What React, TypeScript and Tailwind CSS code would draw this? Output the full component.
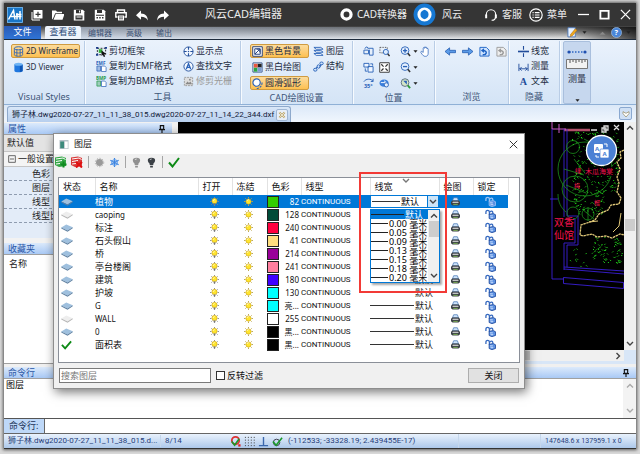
import { useState, type ReactNode } from "react";
import { clsx } from "clsx";

type Layer = {
  name: string;
  color: string;
  swatch: string;
  state: "used" | "empty" | "current";
};

const layers: Layer[] = [
  { name: "植物", color: "82", swatch: "#33cc00", state: "used" },
  { name: "caoping", color: "128", swatch: "#004c39", state: "empty" },
  { name: "标注", color: "240", swatch: "#ff003f", state: "used" },
  { name: "石头假山", color: "41", swatch: "#ffdf7f", state: "used" },
  { name: "桥", color: "214", swatch: "#990099", state: "used" },
  { name: "亭台楼阁", color: "241", swatch: "#ff7f9f", state: "used" },
  { name: "建筑", color: "180", swatch: "#3f00ff", state: "used" },
  { name: "护坡", color: "130", swatch: "#00ffff", state: "used" },
  { name: "G", color: "亮...", swatch: "#00ffff", state: "used" },
  { name: "WALL", color: "255", swatch: "#ffffff", state: "empty" },
  { name: "0", color: "黑...", swatch: "#000000", state: "used" },
  { name: "面积表", color: "黑...", swatch: "#000000", state: "current" },
];

const columns = [
  { label: "状态", width: "w-[36px]" },
  { label: "名称", width: "w-[103px]" },
  { label: "打开", width: "w-[34px]" },
  { label: "冻结", width: "w-[35px]" },
  { label: "色彩", width: "w-[34px]" },
  { label: "线型", width: "w-[69px]" },
  { label: "线宽", width: "w-[69px]" },
  { label: "绘图", width: "w-[34px]" },
  { label: "锁定", width: "w-[35px]" },
];

const weights = ["默认", "0.00 毫米", "0.05 毫米", "0.09 毫米", "0.13 毫米", "0.15 毫米", "0.18 毫米", "0.20 毫米"];

const BLUE = "#2a62b8";

/* ---------- icons ---------- */

const Icon = ({ children, size = "size-[11px]", box = "0 0 12 12" }: { children: ReactNode; size?: string; box?: string }) => (
  <svg viewBox={box} className={clsx("shrink-0", size)} fill="none" aria-hidden="true">
    {children}
  </svg>
);

const Logo = () => (
  <Icon size="size-4" box="0 0 16 16">
    <rect width="16" height="16" rx="1" fill="#1976c8" />
    <rect x=".5" y=".5" width="15" height="15" fill="none" stroke="#8cc4ee" strokeWidth=".7" />
    <path d="M1.500 12.500 6.500 3.500 8 12.500M4 9.500h10.500M10 12.500V6M13 12.500V4M9 7.500h5.500" stroke="#fff" strokeWidth="1.500" />
  </Icon>
);

const titleIcons: { label: string; art: ReactNode }[] = [
  {
    label: "新建",
    art: (
      <>
        <path d="M1 3v8h8" stroke="#fff" />
        <rect x="2.500" y="1" width="9" height="8.500" rx=".6" fill="#fff" />
        <path d="M7 2.800v5M4.500 5.300h5" stroke="#333" strokeWidth="1.200" />
      </>
    ),
  },
  { label: "打开", art: <path d="M0 10.500V1.500h4l1 1.200h5v1.600H3.200L1 9.500zM3.800 5H12.500L10.500 10.800H1.500z" fill="#fff" /> },
  {
    label: "保存",
    art: (
      <>
        <path d="M.8.800h9L11.300 2.200v9.200H.8z" fill="#fff" />
        <path d="M3 1h5v3.300H3zM2.500 6.500h7v4h-7z" fill="#333" />
        <path d="M6 1.500h1.200v2H6zM3.500 7.500h5v1h-5z" fill="#fff" />
      </>
    ),
  },
  {
    label: "另存为",
    art: (
      <>
        <path d="M.8.800h9L11.300 2.200v9.200H.8z" fill="#fff" />
        <path d="M3 1h5v3H3zM2 5.800h8v1H2zM2.500 8h1.500v1.500H2.500zM5.200 8h1.500v1.500H5.200zM8 8h1.500v1.500H8z" fill="#333" />
      </>
    ),
  },
  {
    label: "打印",
    art: (
      <>
        <path d="M2.500 3V1h7v2M2.500 8H.8V3.800h10.400V8H9.500" stroke="#fff" strokeWidth="1.400" />
        <path d="M3 6.500h6v5H3z" fill="#fff" />
        <path d="M4 8h4M4 9.800h4" stroke="#333" strokeWidth=".8" />
      </>
    ),
  },
  { label: "撤销", art: <path d="M5 1.500v3c4.500 0 6.800 3 6.800 7C10.500 9 8.500 7.800 5 7.800v3L0 6.200z" fill="#fff" /> },
  { label: "重做", art: <path d="M7 1.500v3C2.500 4.500.2 7.500.2 11.500 1.500 9 3.500 7.800 7 7.800v3l5-4.600z" fill="#fff" /> },
];

const WireCylinder = () => (
  <Icon>
    <ellipse cx="6" cy="2.500" rx="4.500" ry="1.700" stroke={BLUE} />
    <path d="M1.500 2.500v7c0 2.300 9 2.300 9 0v-7M1.500 6c0 2.200 9 2.200 9 0M4.200 4v7M7.800 4v7" stroke={BLUE} strokeWidth=".9" />
  </Icon>
);

const SolidCylinder = () => (
  <Icon>
    <path d="M1.500 2.500v7c0 2.400 9 2.400 9 0v-7z" fill="#1f77df" />
    <path d="M7.500 3h3v7l-3 1z" fill="#0e55b5" />
    <ellipse cx="6" cy="2.500" rx="4.500" ry="1.700" fill="#6fb4f4" />
  </Icon>
);

const CropIcon = () => (
  <Icon>
    <path d="M1.500 2.500h9v7h-9z" stroke="#222" strokeDasharray="2 1.500" />
    <path d="M3 3.500h4v4H3z" fill="#2fae35" />
    <path d="M0 1h2.500v2H0zM9.500 1H12v2H9.500zM0 8.500h2.500v2H0z" fill="#1b3c8c" />
    <path d="m6 5 5 3.500-2 .5 1 2.500-1.500.5-1-2.500L6 11z" fill="#111" />
  </Icon>
);

const CopyFormatIcon = ({ label, fill }: { label: string; fill: string }) => (
  <Icon>
    <text x="0" y="4.200" fontSize="5" fontWeight="700" fill={fill}>
      {label}
    </text>
    <path d="M1 5.500h4V11H1z" fill={fill} fillOpacity=".35" stroke={fill} strokeWidth=".8" />
    <path d="M6 5.500h3.500L11 7v4.500H6z" fill="#fff" stroke={BLUE} strokeWidth=".8" />
  </Icon>
);

const TargetIcon = () => (
  <Icon>
    <circle cx="6" cy="6" r="5" stroke="#24509c" fill="#f3f8ff" />
    <path d="M6 1v3M6 8v3M1 6h3M8 6h3" stroke="#24509c" strokeWidth="1.200" />
    <circle cx="6" cy="6" r=".8" fill="#24509c" />
  </Icon>
);

const FindTextIcon = () => (
  <Icon>
    <circle cx="6" cy="6" r="5" stroke="#24509c" fill="#f3f8ff" />
    <path d="m3.500 9 2.500-6 2.500 6M4.300 7h3.400" stroke={BLUE} strokeWidth="1.400" />
  </Icon>
);

const RasterIcon = () => (
  <Icon>
    <path d="M1.500 1.500h9v9h-9z" fill="#ddd" stroke="#999" strokeDasharray="2 1" />
    <path d="m2.500 9 2.500-3 1.500 1.500L8 6l2 3z" fill="#888" />
    <circle cx="7.500" cy="4" r="1" fill="#888" />
  </Icon>
);

const BlackBgIcon = () => (
  <Icon>
    <path d="M.8.800h10.400v10.400H.8z" fill="#fff" stroke="#1d3a78" />
    <path d="M3 3h6v6H3z" stroke="#1d3a78" />
    <path d="m3 9 5-5M5 3.500h3.500V7" stroke="#1d3a78" />
  </Icon>
);

const BwIcon = () => (
  <Icon>
    <path d="M1 1h10v10H1z" fill="#fff" stroke="#31528a" />
    <path d="M2 6h4v4.500H2z" fill="#2aa843" />
    <path d="M6 2h4.500v4H6z" fill="#222" />
    <path d="M6 6h4.500v4.500H6z" fill="#7b9bd0" />
    <path d="M2 2h4v4H2z" fill="#e9573f" />
  </Icon>
);

const ArcIcon = () => (
  <Icon>
    <circle cx="5" cy="5" r="4" fill="#fff" stroke={BLUE} strokeWidth="1.300" />
    <path d="M11 5c0 4-3 6.500-6.500 6.500" stroke={BLUE} strokeWidth="1.200" strokeDasharray="2.500 1" />
  </Icon>
);

const LayersIcon = () => (
  <Icon>
    <path d="M1 1.500h7.500l2.500 2H3.500zM1 4.800h7.500l2.500 2H3.500zM1 8.200h7.500l2.500 2H3.500z" fill="#fff" stroke={BLUE} />
  </Icon>
);

const StructureIcon = () => (
  <Icon>
    <path d="m2 10 3-4 2 1 3-4.500" stroke={BLUE} strokeWidth="1.200" />
    <ellipse cx="2.500" cy="9.500" rx="1.900" ry="1.600" fill="#cfe3fb" stroke={BLUE} />
    <ellipse cx="6" cy="6" rx="1.500" ry="1.900" fill="#cfe3fb" stroke={BLUE} />
    <ellipse cx="9.300" cy="2.600" rx="1.900" ry="1.500" fill="#cfe3fb" stroke={BLUE} />
  </Icon>
);

const viewIcons: { label: string; art: ReactNode; menu?: boolean }[] = [
  {
    label: "旋转视图",
    art: <path d="M5 2.500h6v7.500H7V4M1 4.500h5v4H1zM2 3l1.500-2 2 .8" stroke={BLUE} />,
  },
  {
    label: "窗口缩放",
    art: (
      <>
        <path d="M1 1.500h8v6H1z" stroke="#555" strokeDasharray="1.500 1.200" />
        <circle cx="7.500" cy="6.500" r="2.800" fill="#dcecff" stroke={BLUE} />
        <path d="m9.500 8.500 2 2.500" stroke="#333" strokeWidth="1.500" />
      </>
    ),
  },
  {
    label: "放大",
    menu: true,
    art: (
      <>
        <circle cx="5.500" cy="5" r="4.200" fill="#e6f1ff" stroke={BLUE} />
        <path d="M3.200 5h4.600M5.500 2.700v4.600" stroke={BLUE} strokeWidth="1.500" />
        <path d="m8.500 8 2.500 3" stroke="#333" strokeWidth="1.700" />
      </>
    ),
  },
  {
    label: "复制视图",
    art: <path d="M1 1.500h5.500v4H1zM5.500 5h5.500v6H5.500zM2.500 7v3h2M8 2h2.500v2" fill="#eef5ff" stroke={BLUE} />,
  },
  {
    label: "适应窗口",
    art: (
      <>
        <path d="M.8.800h10.400v10.400H.8z" fill="#fff" stroke="#333" />
        <path d="m2.500 2.500 7 7M9.500 2.500l-7 7" stroke="#333" strokeWidth="1.300" strokeDasharray="3.500 3" />
      </>
    ),
  },
  {
    label: "缩小",
    menu: true,
    art: (
      <>
        <circle cx="5.500" cy="5" r="4.200" fill="#e6f1ff" stroke={BLUE} />
        <path d="M3.200 5h4.600" stroke={BLUE} strokeWidth="1.500" />
        <path d="m8.500 8 2.500 3" stroke="#333" strokeWidth="1.700" />
      </>
    ),
  },
  {
    label: "旋转35度",
    art: (
      <>
        <path d="M1 4c2-3.500 8-3.500 10-.5M11 .8v3H8.500" stroke={BLUE} />
        <text x="1" y="10.500" fontSize="6" fontWeight="700" fill={BLUE}>
          35°
        </text>
      </>
    ),
  },
  {
    label: "平移缩放",
    art: (
      <>
        <ellipse cx="5.500" cy="5.500" rx="5" ry="4" fill="#3b7fdc" />
        <path d="M2 5h5M5.500 3 8 5 5.500 7" stroke="#fff" />
        <circle cx="8" cy="7.500" r="2.300" fill="#e6f1ff" stroke={BLUE} />
      </>
    ),
  },
  {
    label: "缩放范围",
    menu: true,
    art: (
      <>
        <circle cx="5.500" cy="5" r="4.200" fill="#d3e5c6" stroke="#5a6c80" />
        <path d="m3.500 3 4 0 0 4z" fill={BLUE} />
        <path d="m8.500 8 2.500 3" stroke="#2b9a38" strokeWidth="2" />
      </>
    ),
  },
];

const HandIcon = () => (
  <Icon>
    <path
      d="M3.500 7V2.500c0-1 1.300-1 1.300 0V1.600c0-1 1.400-1 1.400 0v.6c0-1 1.400-1 1.400 0v1c0-1 1.300-.8 1.300.2V8c0 2-1 3.300-3 3.300S3.300 10.500 1 7.200c-.6-1 .6-1.800 1.300-1z"
      fill="#fff"
      stroke={BLUE}
      strokeWidth=".8"
    />
  </Icon>
);

const ArrowIcon = ({ flip }: { flip?: boolean }) => (
  <Icon>
    <path d={flip ? "M12 6 7 2v2.700H.5v2.600H7V10z" : "m0 6 5-4v2.700h6.500v2.600H5V10z"} fill="#5b9be8" stroke="#1d56ad" strokeWidth=".8" />
  </Icon>
);

const PageTurnIcon = ({ muted }: { muted?: boolean }) => {
  const c = muted ? "#9b9b9b" : "#1c62c4";
  return (
    <Icon>
      <path d="M1 1.500h7l3 3v6.500H1z" fill={muted ? "#eee" : "#cfe4ff"} stroke={c} />
      <path d="M4 9.500c4.500.5 5.500-4 1-4.500" stroke={c} strokeWidth="1.600" />
      <path d="m2 5 3.500-2.500v5z" fill={c} />
    </Icon>
  );
};

const Caret = () => (
  <Icon size="size-[5px]" box="0 0 6 6">
    <path d="M.5 1.500h5L3 4.500z" fill="#222" />
  </Icon>
);

const Chevron = ({ d = "m1 2 3 3 3-3", className = "text-[#444]" }: { d?: string; className?: string }) => (
  <svg viewBox="0 0 8 8" className={clsx("size-2 shrink-0", className)} fill="none" stroke="currentColor" strokeWidth="1.400" aria-hidden="true">
    <path d={d} />
  </svg>
);

const UP = "m1 5.500 3-3 3 3";

const PinIcon = () => (
  <Icon size="size-2">
    <path d="M3.500 1h5v5.500h-5zM1.500 7h9M6 7v5" stroke="#111" strokeWidth="1.700" />
  </Icon>
);

const Sun = ({ rays }: { rays?: boolean }) => (
  <Icon size="size-[9px]">
    <path
      d="M6 0v2M6 10v2M0 6h2M10 6h2M1.800 1.800l1.400 1.400M8.800 8.800l1.400 1.400M1.800 10.200l1.400-1.400M8.800 3.200l1.400-1.400"
      stroke={rays ? "#888" : "#b5a24a"}
      strokeWidth="1.200"
    />
    <circle cx="6" cy={rays ? 5.300 : 6} r="3.500" fill="#ffe52e" stroke="#c79a12" strokeWidth=".7" />
    <path d="M4.200 5c.3-1 1-1.500 2-1.500" stroke="#fff" strokeWidth="1" />
    {rays && <path d="M4.800 8.600h2.400V11H4.800z" fill="#777" />}
  </Icon>
);

const PrinterIcon = () => (
  <Icon size="size-[9px]">
    <path d="M3.500 1h5L10 5H2z" fill="#cfe4fa" stroke="#4778b5" />
    <path d="M1.500 4.800h9L12 6.500v3l-2 1.700H2L0 9.500v-3z" fill="#3c4147" />
    <path d="M2.500 6.300h7l.8 1.200H1.700z" fill="#f1f1f1" />
    <path d="M3 9.200h6v1H3z" fill="#8fd05a" />
  </Icon>
);

const UnlockIcon = ({ light }: { light?: boolean }) => (
  <Icon size="size-[11px]">
    <path d="M4.800 6.500V3.500C4.800.8 1 .8 1 3.500V5.500M8.500 5V3.800C8.500 1.800 6 1.800 6 3.500" stroke={light ? "#9dc3f5" : "#3669bf"} strokeWidth="1.400" />
    <path d="M4.500 5.800 9 5l2.500 1.300v4L7.500 11.600l-3-1.300z" fill="#5b90e2" stroke={light ? "#9dc3f5" : "#1c469a"} strokeWidth=".9" />
    <path d="M5.500 7.500h3M6 9.500h3" stroke="#d5e6ff" />
  </Icon>
);

const LayerState = ({ state }: { state: Layer["state"] }) =>
  state === "current" ? (
    <Icon>
      <path d="m1 6.500 3.500 3.800L11 2.500" stroke="#0d8a16" strokeWidth="2" />
    </Icon>
  ) : (
    <Icon size="h-[9px] w-[12px]" box="0 0 12 9">
      <path d="m.3 4.500 5-3 6.400 2.700-5.200 3.300z" fill={state === "used" ? "#9fc0de" : "#eeeeee"} />
      <path d="m.3 4.500 6.200 3 5.200-3.300v1L6.500 8.700.3 5.500z" fill={state === "used" ? "#5d7fa0" : "#b5b5b5"} />
    </Icon>
  );

/* ---------- ribbon ---------- */

const Group = ({ label, children, className }: { label: string; children: ReactNode; className?: string }) => (
  <section className={clsx("flex shrink-0 flex-col border-r border-[#b9cde6] shadow-[1px_0_0_#f7fbff]", className)}>
    <div className="flex grow pt-[2px]">{children}</div>
    <h2 className="h-[14px] text-center text-[9px] leading-[13px] text-[#3d5578]">{label}</h2>
  </section>
);

const RibbonButton = ({
  icon,
  label,
  active,
  disabled,
  small,
}: {
  icon: ReactNode;
  label: string;
  active?: boolean;
  disabled?: boolean;
  small?: boolean;
}) => (
  <button
    type="button"
    disabled={disabled}
    className={clsx(
      "my-px flex h-[14px] items-center gap-[2px] rounded-[2px] border px-px leading-[12px] whitespace-nowrap",
      small ? "text-[8px]" : "text-[9px]",
      active ? "border-[#cf9b41] bg-linear-to-b from-[#fcdc9c] to-[#fdc04e]" : "border-transparent",
      disabled ? "text-[#9a9a9a]" : "text-[#1e2c42]"
    )}
  >
    {icon}
    {label}
  </button>
);

const tabs = ["编辑器", "高级", "输出"];

const TitleBar = () => (
  <header className="flex h-[23px] shrink-0 items-center bg-[#353535] pl-[3px] text-[10px] text-[#ececec]">
    <Logo />
    <div className="ml-2 flex gap-[9px]">
      {titleIcons.map((item) => (
        <button key={item.label} type="button" aria-label={item.label}>
          <Icon size="size-3">{item.art}</Icon>
        </button>
      ))}
    </div>
    <h1 className="ml-9 text-[11px]">风云CAD编辑器</h1>
    <div className="ml-auto flex items-center">
      <button type="button" className="flex items-center gap-1">
        <Icon size="size-[13px]">
          <circle cx="6" cy="6" r="4.200" stroke="#fff" strokeWidth="3" />
        </Icon>
        CAD转换器
      </button>
      <button type="button" className="ml-[6px] flex items-center gap-[6px]">
        <Icon size="size-[23px]">
          <circle cx="6" cy="6" r="5.700" fill="#1678d3" />
          <circle cx="6" cy="6" r="2.900" stroke="#fff" strokeWidth="1.600" />
          <path d="m6 3.500 1 .5v4L6 8.500 5 8V4z" fill="#1678d3" />
        </Icon>
        风云
      </button>
      <button type="button" className="ml-[22px] flex items-center gap-1">
        <Icon size="size-[14px]">
          <path d="M2 6.500V5.500a4 4 0 0 1 8 0v1.500c0 2-1 3.500-3.500 3.500" stroke="#fff" />
          <path d="M1 5.500h1.700v3.300H1zM9.300 5.500H11v3.300H9.300z" fill="#fff" />
        </Icon>
        客服
      </button>
      <button type="button" className="ml-[7px] flex items-center gap-1">
        <Icon size="size-[14px]">
          <circle cx="6" cy="6" r="5.300" stroke="#fff" />
          <path d="M3 4h1M5 4h4M3 6h1M5 6h4M3 8h1M5 8h4" stroke="#fff" />
        </Icon>
        菜单
      </button>
      <button type="button" aria-label="最小化" className="ml-[11px]">
        <Icon>
          <path d="M0 6h12" stroke="#fff" strokeWidth="1.400" />
        </Icon>
      </button>
      <button type="button" aria-label="最大化" className="ml-[10px]">
        <Icon>
          <path d="M1.500 2h9v8.500h-9z" stroke="#fff" strokeWidth="2" />
        </Icon>
      </button>
      <button type="button" aria-label="关闭窗口" className="mr-[5px] ml-[10px]">
        <Icon>
          <path d="m1 1 10 10M11 1 1 11" stroke="#fff" strokeWidth="1.400" />
        </Icon>
      </button>
    </div>
  </header>
);

const TabStrip = () => (
  <nav className="flex h-[14px] shrink-0 items-end border-b border-[#1d2b3c] bg-linear-to-b from-[#3d3d3d] to-[#e9e9e9] text-[9px] leading-[12px]">
    <a href="#file" className="h-[13px] w-[37px] bg-linear-to-b from-[#2a5ab4] to-[#2f74d6] text-center text-white">
      文件
    </a>
    <a href="#viewer" className="ml-1 h-[13px] w-[36px] rounded-t-[2px] bg-[#eef4fc] text-center text-[#2d4a78]">
      查看器
    </a>
    <div className="flex grow gap-[14px] bg-linear-to-r from-[#c3d3ea]/60 to-transparent pl-[7px] text-[8px]">
      {tabs.map((tab) => (
        <a key={tab} href={`#${tab}`} className="text-[#3b4f72]">
          {tab}
        </a>
      ))}
    </div>
    <div className="flex items-center gap-1 bg-linear-to-r from-transparent to-black/70 pr-[5px] pb-px">
      <Icon>
        <path d="M1 .8h8v10H1z" fill="#e9f2ff" stroke="#4a76b8" />
        <path d="m4 8 5-6 2 1.500-5 6-2.500 1z" fill="#f1a91e" stroke="#9c5d0e" strokeWidth=".5" />
      </Icon>
      <Caret />
      <span className="w-[3px]" />
      <Icon size="size-[9px]">
        <path d="m2 9 4-4 4 4z" fill="#888" />
      </Icon>
      <Icon>
        <circle cx="6" cy="6" r="5.500" fill="#4a86d8" stroke="#b8d4f5" strokeWidth=".6" />
        <text x="3.800" y="9" fontSize="8" fontWeight="700" fill="#fff">
          ?
        </text>
      </Icon>
      <Caret />
    </div>
  </nav>
);

const Ribbon = () => (
  <div className="flex h-[65px] shrink-0 overflow-hidden border-b border-[#8fb0d6] bg-linear-to-b from-[#eaf2fc] to-[#d4e4f6] pt-px">
    <Group label="Visual Styles" className="w-[81px]">
      <div className="flex grow flex-col pr-1 pl-[7px]">
        <RibbonButton icon={<WireCylinder />} label="2D Wireframe" active small />
        <RibbonButton icon={<SolidCylinder />} label="3D Viewer" small />
      </div>
    </Group>
    <Group label="工具" className="w-[156px]">
      <div className="w-[87px] pl-[9px]">
        <RibbonButton icon={<CropIcon />} label="剪切框架" />
        <RibbonButton icon={<CopyFormatIcon label="EMF" fill={BLUE} />} label="复制为EMF格式" />
        <RibbonButton icon={<CopyFormatIcon label="BMP" fill="#279a4b" />} label="复制为BMP格式" />
      </div>
      <div className="pl-[9px]">
        <RibbonButton icon={<TargetIcon />} label="显示点" />
        <RibbonButton icon={<FindTextIcon />} label="查找文字" />
        <RibbonButton icon={<RasterIcon />} label="修剪光栅" disabled />
      </div>
    </Group>
    <Group label="CAD绘图设置" className="w-[112px]">
      <div className="flex w-[68px] flex-col pl-[9px]">
        <RibbonButton icon={<BlackBgIcon />} label="黑色背景" active />
        <RibbonButton icon={<BwIcon />} label="黑白绘图" />
        <RibbonButton icon={<ArcIcon />} label="圆滑弧形" active />
      </div>
      <div className="pl-[2px]">
        <RibbonButton icon={<LayersIcon />} label="图层" />
        <RibbonButton icon={<StructureIcon />} label="结构" />
      </div>
    </Group>
    <Group label="位置" className="w-[82px]">
      <div className="grid grid-cols-[16px_21px_20px] content-start pl-[10px]">
        {viewIcons.map((item) => (
          <button key={item.label} type="button" aria-label={item.label} className="flex h-4 items-center gap-[2px]">
            <Icon>{item.art}</Icon>
            {item.menu && <Caret />}
          </button>
        ))}
      </div>
      <button type="button" aria-label="平移" className="flex h-4 items-center">
        <HandIcon />
      </button>
    </Group>
    <Group label="浏览" className="w-[74px]">
      <div className="flex h-4 items-center gap-[6px] pl-[10px]">
        <ArrowIcon />
        <ArrowIcon flip />
        <PageTurnIcon />
        <PageTurnIcon muted />
      </div>
    </Group>
    <Group label="隐藏" className="w-[51px]">
      <div className="pl-[7px]">
        <RibbonButton
          icon={
            <Icon>
              <path d="M0 6h12" stroke="#214c9a" strokeWidth="1.800" />
              <path d="M6 0v4M6 8v4" stroke="#214c9a" strokeWidth="1.200" />
            </Icon>
          }
          label="线宽"
        />
        <RibbonButton
          icon={
            <Icon>
              <path d="M1 3v8M11 3v8M1.500 8.500h9M4 6.500l-2 2 2 2M8 6.500l2 2-2 2" stroke="#214c9a" />
            </Icon>
          }
          label="测量"
        />
        <RibbonButton
          icon={
            <Icon>
              <text x="2" y="10" fontSize="11" fontWeight="700" fill="#214c9a" fontFamily="Liberation Serif, serif">
                A
              </text>
            </Icon>
          }
          label="文本"
        />
      </div>
    </Group>
    <button type="button" className="ml-[3px] flex w-[28px] shrink-0 flex-col items-center rounded-[2px] border border-[#a9bfdd] bg-[#c6d7ee] pt-[7px] text-[9px] text-[#1e2c42]">
      <Icon size="h-[6px] w-[20px]" box="0 0 20 6">
        <path d="M2 3h16" stroke="#2d66c4" strokeDasharray="1.500 1.500" strokeWidth="1.500" />
        <circle cx="2" cy="3" r="1.600" fill="#1e4fb0" />
        <circle cx="18" cy="3" r="1.600" fill="#1e4fb0" />
      </Icon>
      <Icon size="mt-[4px] h-[10px] w-[22px]" box="0 0 22 10">
        <path d="M.5.500h21v9H.5z" fill="#f2f2f2" stroke="#777" />
        <path d="M4 1v3M7 1v2M10 1v3M13 1v2M16 1v3M19 1v2" stroke="#555" />
      </Icon>
      <span className="mt-1 grow leading-[12px]">测量</span>
      <Caret />
    </button>
  </div>
);

const DocumentTabs = () => (
  <div className="flex h-[17px] shrink-0 items-end justify-between bg-linear-to-b from-[#dbe8f8] to-[#f0f6fd] pr-1 pl-[3px]">
    <div className="flex h-[16px] items-center gap-[2px] rounded-t-[3px] border border-b-0 border-[#8ea9cc] bg-linear-to-b from-[#d9e7f8] to-[#b7cfee] pr-[2px] pl-1">
      <a href="#document" className="font-[Roboto,'Noto_Sans_CJK_SC',sans-serif] text-[8px] whitespace-nowrap text-[#12203a]">
        狮子林.dwg2020-07-27_11_11_38_015.dwg2020-07-27_11_14_22_344.dxf
      </a>
      <button type="button" aria-label="关闭文档" className="flex size-[12px] items-center justify-center rounded-[2px] border border-[#9fb6d4] bg-[#e8eff8]">
        <Icon size="size-2">
          <path d="m2 2 8 8M10 2l-8 8" stroke="#b79f5e" strokeWidth="3" />
          <path d="m2 2 8 8M10 2l-8 8" stroke="#fff" strokeWidth="1" />
        </Icon>
      </button>
    </div>
    <button type="button" aria-label="文档列表" className="mb-[2px] flex size-[13px] items-center justify-center rounded-[2px] border border-[#8aa8d0] bg-[#cfe0f5]">
      <Icon size="size-2">
        <path d="M6 10.500 1.500 5.500V2.500L6 5l4.500-2.500v3z" fill="#fff" stroke="#8c8054" />
      </Icon>
    </button>
  </div>
);

const PanelHeader = ({ label, pin }: { label: string; pin?: boolean }) => (
  <div className="flex h-[12px] shrink-0 items-center justify-between border-b border-[#a0a0a0] bg-linear-to-b from-[#dceafb] to-[#a9c9f5] pr-[6px] pl-1 text-[9px] leading-[11px] text-[#2b57a6]">
    <h2>{label}</h2>
    {pin && <PinIcon />}
  </div>
);

const properties = ["色彩", "图层", "线型", "线型比例"];

const SidePanel = () => (
  <aside className="flex w-[174px] shrink-0 flex-col bg-[#f2f2f2] pt-px pr-[6px] text-[9px] text-[#222]">
    <PanelHeader label="属性" pin />
    <div className="h-4 bg-[#e4e4e4] pl-[3px] leading-4">默认值</div>
    <div className="bg-[#e3ecf8] pb-[15px]">
      <div className="flex h-4 items-center gap-[2px] border-y border-[#c5c5c5] bg-[#f4f4f4] pl-1">
        <Icon size="size-2">
          <path d="M1 1h10v10H1zM3 6h6" stroke="#555" strokeWidth="1.300" />
        </Icon>
        一般设置
      </div>
      {properties.map((label) => (
        <div key={label} className="h-[14px] border-b border-dashed border-[#8f9caf] pl-7 leading-[14px]">
          {label}
        </div>
      ))}
    </div>
    <div className="h-[5px]" />
    <PanelHeader label="收藏夹" />
    <div className="grow border-b border-[#a0a0a0] bg-white pt-[2px] pl-[5px]">名称</div>
  </aside>
);

/* Scatter of vegetation dots; a fixed seed keeps the plan stable between renders */
const scatter = (count: number, x: number, y: number, w: number, h: number, seed: number) => {
  let s = seed;
  const next = () => {
    s = (s * 16807) % 2147483647;
    return s / 2147483647;
  };
  return Array.from({ length: count }, () => `M${(x + next() * w).toFixed(1)} ${(y + next() * h).toFixed(1)}l1 ${next() > 0.5 ? 1 : -1}`).join("");
};

const leaves = scatter(220, 570, 133, 46, 62, 77) + scatter(60, 572, 190, 30, 26, 41) + scatter(75, 591, 238, 30, 26, 19) + scatter(12, 568, 248, 24, 20, 5);

const SitePlan = () => (
  <svg viewBox="525 123 97 227" className="h-[227px] w-[97px] shrink-0" fill="none" aria-label="狮子林平面图">
    <path d="M562 131h26" stroke="#b0506a" strokeWidth="2.500" />
    <path d="M550 123v7h14M557 125v9" stroke="#c95ac9" />
    <path
      d="M550 130v150h11M548 200h8M562 130v90h11v24h-11v27M565 130v87h11v29h-11v22M562 268l60 4M562 270l60 5M561.500 278.500l60 5v6l-60-5z"
      stroke="#3a1fd6"
      strokeWidth=".9"
    />
    <g stroke="#1d8f1d" strokeWidth=".8">
      <circle cx="583" cy="170" r="27" />
      <circle cx="571" cy="148" r="6.500" />
      <circle cx="573" cy="190" r="13" />
      <circle cx="571" cy="214" r="6" />
      <circle cx="586" cy="215" r="6" />
      <path d="M556 195c0 8 3 14 8 18M572 160l14 18M562 170l20 6M564 186l20 8M582 140l24 12M580 210l12 10M586 208v14" />
    </g>
    <path d={leaves} stroke="#22d61c" strokeWidth="1" />
    <path
      d="m622 151-4 2 1 6-4 4 3 7-3 8 2 6-2 9 4 6-2 6-8 1-3 5-9 4-4 6-8 3-6 2-1 10 3 1 9-2 5 3 9-1 6 2 8-4 5 1"
      stroke="#e0c878"
      strokeDasharray="2.500 .6"
      strokeWidth="1.300"
    />
    <path d="m596 222-9 1M611 233l6-6 2-13" stroke="#e0c878" />
    <path d="M583 168h30v9h-30zM552 218h19v24h-19z" fill="#000" />
    <g fill="#f0124f" fontSize="7">
      <text x="583" y="175">
        木瓜海棠
      </text>
      <text x="573" y="174" fontSize="6">
        绿
      </text>
      <text x="572" y="189" fontSize="6">
        梅
      </text>
      <text x="592" y="206" fontSize="6">
        榴
      </text>
      <text x="552" y="227" fontSize="10">
        双香
      </text>
      <text x="552" y="240" fontSize="10">
        仙馆
      </text>
    </g>
    <path d="M589 131h6M602 127h4v4h-4zM600 129h4v4h-4zM612 126l5 5M617 126l-5 5" stroke="#ddd" strokeWidth="1.300" />
    <circle cx="599.500" cy="151.500" r="15" fill="#4b80d4" stroke="#fff" strokeWidth="1.300" />
    <rect x="592" y="145" width="9" height="9" rx="1" fill="#fff" />
    <rect x="598" y="150" width="9" height="9" rx="1" fill="#fff" stroke="#4b80d4" strokeWidth=".7" />
    <path d="M602 145h3v3M597 158h-3v-2" stroke="#fff" />
    <text x="593" y="151.500" fontSize="6" fontWeight="700" fill="#4b80d4">
      A
    </text>
    <text x="600.500" y="157" fontSize="6" fontWeight="700" fill="#4b80d4">
      A
    </text>
  </svg>
);

const Canvas = () => (
  <main className="flex min-w-0 grow flex-col bg-[#d8e6f7] pb-[3px]">
    <div className="flex grow">
      <div className="flex min-w-0 grow justify-end overflow-hidden bg-black">
        <SitePlan />
      </div>
      <div className="flex w-[12px] flex-col items-center bg-[#f0f0f0] py-[2px]">
        <Chevron d={UP} />
        <div className="grow-4" />
        <div className="h-[12px] w-[10px] bg-[#cdcdcd]" />
        <div className="grow-5" />
        <Chevron />
      </div>
    </div>
    <div className="mr-[12px] flex h-[11px] shrink-0 items-center justify-end bg-[#f0f0f0] pr-[2px]">
      <div className="mr-[84px] h-[9px] w-[180px] bg-[#cdcdcd]" />
      <Chevron d="m2.500 1 3 3-3 3" />
    </div>
  </main>
);

/* ---------- layer dialog ---------- */

const WeightPicker = () => {
  const [value, setValue] = useState("默认");

  return (
    <div className="relative flex h-[13px] items-center border border-[#0078d7] bg-white pl-px text-[9px] text-black">
      <div className="h-px w-[28px] shrink-0 bg-[#333]" />
      <select aria-label="线宽" value={value} onChange={(e) => setValue(e.target.value)} className="min-w-0 grow appearance-none pl-px text-[9px] leading-[11px]">
        {weights.map((w) => (
          <option key={w}>{w}</option>
        ))}
      </select>
      <span className="pointer-events-none flex h-full w-[11px] shrink-0 items-center justify-center border-l border-[#0078d7] bg-[#cce4f7]">
        <Chevron />
      </span>
      <div className="absolute top-[13px] -left-px z-10 flex w-[70px] border border-[#0078d7] bg-white shadow-[2px_2px_2px_rgba(0,0,0,0.35)]">
        <ul className="min-w-0 grow">
          {weights.map((w) => (
            <li key={w} className={w === value ? "bg-[#0078d7] text-white" : undefined}>
              <button type="button" onClick={() => setValue(w)} className="flex h-[9px] w-full items-center gap-px leading-[9px] whitespace-nowrap">
                <span className={clsx("h-px shrink-0 bg-[#222]", w === "默认" ? "w-[33px]" : "w-[17px]")} />
                {w}
              </button>
            </li>
          ))}
        </ul>
        <div className="flex w-[11px] shrink-0 flex-col items-center bg-[#f0f0f0] py-[2px]">
          <Chevron d={UP} />
          <div className="mt-px h-[16px] w-[10px] bg-[#cdcdcd]" />
          <div className="grow" />
          <Chevron />
        </div>
      </div>
    </div>
  );
};

const LayerTable = () => (
  <div className="relative grow border border-[#8a8f98] bg-white">
    <table className="w-full table-fixed border-collapse text-[9px]">
      <colgroup>
        {columns.map((c) => (
          <col key={c.label} className={c.width} />
        ))}
        <col />
      </colgroup>
      <thead>
        <tr>
          {columns.map((c) => (
            <th key={c.label} scope="col" className="relative h-[17px] border-r border-[#e2e2e2] p-0 pl-1 text-left font-normal">
              {c.label}
              {c.label === "线宽" && (
                <span className="absolute -top-px left-[31px]">
                  <Chevron className="text-[#777]" />
                </span>
              )}
            </th>
          ))}
          <th className="p-0" />
        </tr>
      </thead>
      <tbody>
        {layers.map((layer, i) => (
          <tr key={layer.name} className={clsx("h-[13px] leading-[13px]", i === 0 ? "[&>td:not(:last-child)]:bg-[#0078d7] text-white" : "text-[#111]")}>
            <td className="p-0 pl-[2px]">
              <LayerState state={layer.state} />
            </td>
            <td className={clsx("p-0", /^\w/.test(layer.name) && "text-[8px]")}>{layer.name}</td>
            <td className="p-0 pl-3">
              <Sun rays />
            </td>
            <td className="p-0 pl-3">
              <Sun />
            </td>
            <td className="p-0">
              <div className="flex items-center">
                <span className="size-3 shrink-0 border border-[#222]" style={{ backgroundColor: layer.swatch }} />
                <span className="grow pr-[2px] text-right text-[8px]">{layer.color}</span>
              </div>
            </td>
            <td className="p-0 font-[Roboto,sans-serif] text-[8px]">CONTINUOUS</td>
            <td className="p-0">
              {i === 0 ? (
                <WeightPicker />
              ) : (
                <div className="flex items-center gap-px">
                  <span className="h-px w-[44px] bg-[#333]" />
                  默认
                </div>
              )}
            </td>
            <td className="p-0 pl-3">
              <PrinterIcon />
            </td>
            <td className="p-0 pl-3">
              <UnlockIcon light={i === 0} />
            </td>
            <td className="p-0" />
          </tr>
        ))}
      </tbody>
    </table>
    <div className="pointer-events-none absolute -top-[6px] left-[300px] z-20 h-[121px] w-[88px] border-2 border-[#f23a36]" />
  </div>
);

const Separator = () => <span className="mx-px h-3 w-px bg-[#a5a5a5]" />;

const StackIcon = ({ remove }: { remove?: boolean }) => (
  <Icon size="size-[12px]">
    <path d="m0 1.500 7-1 4 1.500v8L4 11 0 9z" fill={remove ? "#d93838" : "#35a646"} />
    <path d="m1 3 7-1 2.500 1.500M1 5.500l6-1M1 8l4-.5" stroke="#fff" />
    <path d={remove ? "m5 6 6 5.500M11 6l-6 5.500" : "M8.500 5.500v6M5.500 8.500h6"} stroke={remove ? "#e01010" : "#0f8a1f"} strokeWidth="2" />
  </Icon>
);

const BulbIcon = ({ fill }: { fill: string }) => (
  <Icon>
    <path d="M6 .8c6 0 4 5 2 6.500v1.500H4V7.300C2 5.800 0 .8 6 .8M4.500 9.500h3v2h-3z" fill={fill} />
    <path d="M4.500 3c.3-.6.800-.8 1.500-.8" stroke="#fff" />
  </Icon>
);

const LayerDialog = () => (
  <div role="dialog" aria-label="图层" className="absolute top-[130px] left-[49px] z-10 flex h-[256px] w-[472px] flex-col border border-[#8d8d8d] bg-[#f0f0f0] text-[9px] text-[#111] shadow-[2px_3px_10px_rgba(0,0,0,0.55)]">
    <div className="flex h-[20px] shrink-0 items-center gap-[5px] bg-white pr-[6px] pl-[5px]">
      <Icon size="h-[9px] w-[10px]">
        <path d="M0 0h12v12H0z" fill="#b6c2c9" />
        <path d="M1 2h5v9H1z" fill="#3d8a7c" />
        <path d="M7 2h4v9H7z" fill="#fff" />
      </Icon>
      <h2 className="grow">图层</h2>
      <button type="button" aria-label="关闭对话框">
        <Icon size="size-[9px]">
          <path d="m1 1 10 10M11 1 1 11" stroke="#222" strokeWidth="1.200" />
        </Icon>
      </button>
    </div>
    <div className="flex h-[16px] shrink-0 items-center gap-1 pl-px">
      <StackIcon />
      <StackIcon remove />
      <Separator />
      <Icon>
        <circle cx="6" cy="6" r="3.800" fill="#999" />
        <circle cx="6" cy="6" r="4.600" stroke="#aaa" strokeDasharray="1.500 1.500" />
      </Icon>
      <Icon>
        <path d="M6 1v10M1.500 3.500l9 5M10.500 3.500l-9 5" stroke="#3c84e0" strokeWidth="1.300" />
        <circle cx="6" cy="6" r="3" stroke="#5b9bea" strokeWidth="1.200" />
      </Icon>
      <Separator />
      <BulbIcon fill="#909090" />
      <BulbIcon fill="#3b4046" />
      <Separator />
      <Icon size="size-[12px]">
        <path d="m1 6.500 3.500 4L11 2" stroke="#0d8a16" strokeWidth="2" />
      </Icon>
    </div>
    <div className="flex grow flex-col px-1 pt-[7px]">
      <LayerTable />
    </div>
    <div className="flex h-[25px] shrink-0 items-center gap-[5px] px-[5px]">
      <input aria-label="搜索图层" placeholder="搜索图层" className="h-[15px] w-[152px] border border-[#7a7a7a] bg-white px-px text-[9px] placeholder:text-[#777]" />
      <label className="flex items-center gap-[2px]">
        <input type="checkbox" className="size-[9px] appearance-none border border-[#333] bg-white" />
        反转过滤
      </label>
      <button type="button" className="ml-auto h-[15px] w-[51px] border border-[#adadad] bg-[#e1e1e1] leading-[12px]">
        关闭
      </button>
    </div>
  </div>
);

/* ---------- command line and status ---------- */

const CommandArea = () => (
  <section className="shrink-0 border-t-[3px] border-[#f0f0f0] text-[9px]">
    <PanelHeader label="命令行" pin />
    <div className="flex h-[40px] justify-between border-b border-[#555] bg-white">
      <p className="pl-[2px] leading-[12px]">图层</p>
      <div className="flex w-[13px] flex-col items-center justify-between bg-[#f3f3f3] py-[3px]">
        <Chevron d={UP} className="text-[#aaa]" />
        <Chevron className="text-[#aaa]" />
      </div>
    </div>
    <div className="flex h-[15px] border-b border-[#666]">
      <label htmlFor="command" className="w-[40px] shrink-0 bg-[#bed8f8] pl-[5px] leading-[14px] whitespace-nowrap text-[#1b3157]">
        命令行:
      </label>
      <input id="command" className="min-w-0 grow border-l border-[#666] bg-white px-1" />
    </div>
  </section>
);

const StatusBar = () => (
  <footer className="flex h-[14px] shrink-0 items-center bg-linear-to-b from-[#e9f2fd] to-[#adc8ea] font-[Roboto,'Noto_Sans_CJK_SC',sans-serif] text-[8px] leading-[12px] whitespace-nowrap text-[#27407a]">
    <span className="w-[157px] border-r border-[#c5d7ec] pl-1">狮子林.dwg2020-07-27_11_11_38_015.d...</span>
    <span className="w-[69px] pl-1">8/14</span>
    <span className="flex w-[58px] gap-[3px]">
      <Icon>
        <circle cx="6" cy="5" r="4" stroke="#d33" strokeWidth="2" />
        <path d="m2 6 3 4 5-7" stroke="#189a28" strokeWidth="1.700" />
        <path d="M9 9h2.500v2.500H9z" fill="#d22" />
      </Icon>
      <Icon>
        <path d="M1 1.500h11M1 4.500h11M1 7.500h11M1 10.500h11" stroke="#444" strokeDasharray="1.200 2" />
      </Icon>
      <Icon>
        <path d="M6 1v9M1 10.500h10" stroke="#3b68ad" strokeWidth="1.500" />
      </Icon>
      <Icon>
        <circle cx="5" cy="7" r="3.500" stroke="#334" />
        <path d="m1 6 3.500 4L11 2" stroke="#189a28" strokeWidth="1.700" />
      </Icon>
    </span>
    <span className="grow">(-112533; -33328.19; 2.439455E-17)</span>
    <span className="w-[83px] self-stretch border-x border-[#c5d7ec]" />
    <span className="w-[95px] pl-1 text-[7px]">147648.6 x 137959.1 x 0</span>
  </footer>
);

const App = () => (
  <div className="flex h-screen min-h-[440px] flex-col overflow-hidden bg-[#d9d9d9] px-1 pt-[3px] pb-[5px] font-['Noto_Sans','Noto_Sans_CJK_SC',sans-serif]">
    <div className="relative flex min-h-0 grow flex-col border-b border-[#333] bg-[#f0f0f0] shadow-[0_0_3px_1px_rgba(0,0,0,0.6)]">
      <TitleBar />
      <TabStrip />
      <Ribbon />
      <DocumentTabs />
      <div className="flex min-h-0 grow overflow-hidden">
        <SidePanel />
        <Canvas />
      </div>
      <CommandArea />
      <StatusBar />
      <LayerDialog />
    </div>
  </div>
);

export default App;
